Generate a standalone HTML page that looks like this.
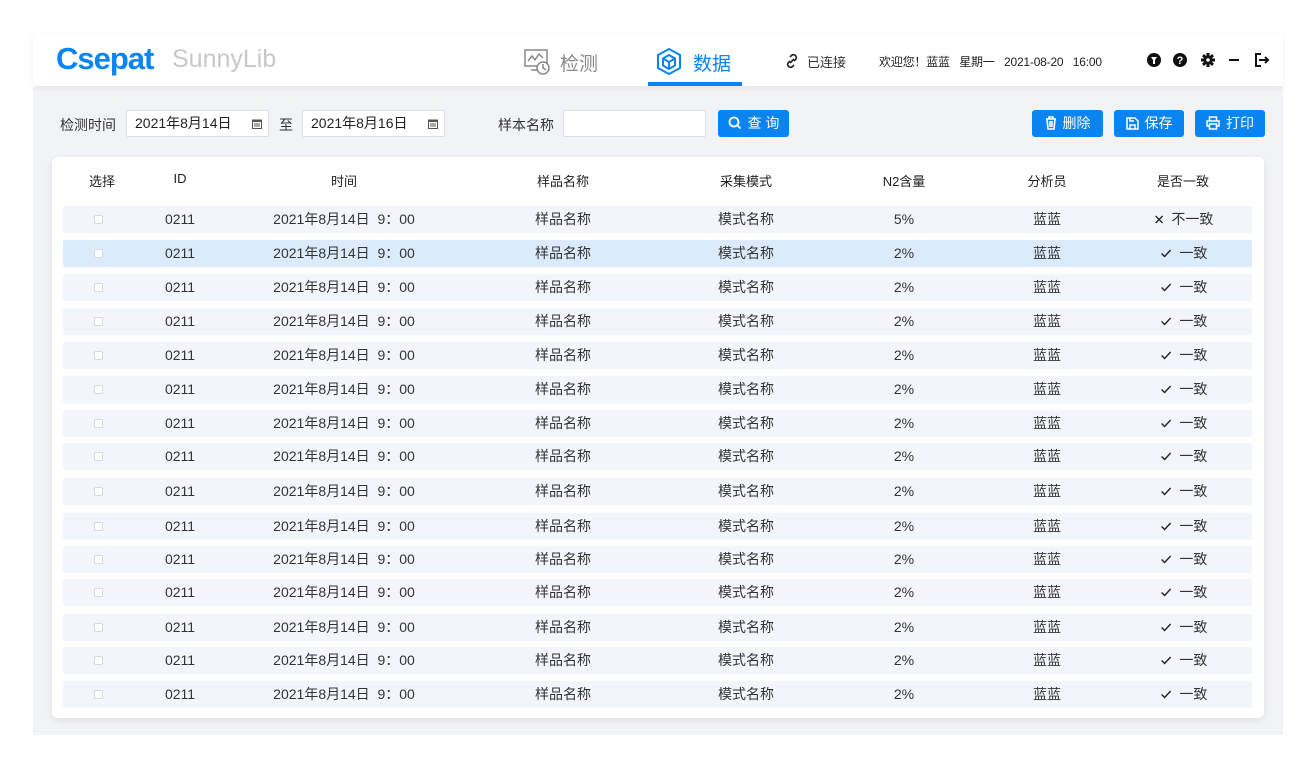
<!DOCTYPE html>
<html><head><meta charset="utf-8"><style>
*{margin:0;padding:0;box-sizing:border-box}
body{width:1316px;height:769px;background:#fff;font-family:"Liberation Sans","Noto Sans CJK SC",sans-serif;position:relative;overflow:hidden;color:#333}
.app{position:absolute;left:33px;top:33px;width:1250px;height:702px;background:#f2f3f7}
.hdr{position:absolute;left:0;top:0;width:1250px;height:53px;background:#fff;box-shadow:0 2px 6px rgba(0,0,0,.06)}
.abs{position:absolute;white-space:nowrap}
.inp{position:absolute;height:27px;background:#fff;border:1px solid #dcdfe6;border-radius:2px;font-size:14px;line-height:25px;padding-left:8px;color:#222}
.inp svg{position:absolute;right:6px;top:8px}
.btn{position:absolute;height:27px;background:#0a84f0;border-radius:3px;color:#fff;font-size:14px;line-height:27px;text-align:center}
.btn svg{vertical-align:-2px;margin-right:6px}
.card{position:absolute;left:19px;top:124px;width:1212px;height:561px;background:#fff;border-radius:6px;box-shadow:0 2px 8px rgba(0,0,0,.08)}
.th{position:absolute;top:14px;font-size:13px;color:#222;transform:translateX(-50%)}
.row{position:absolute;left:11px;width:1189px;height:27px;background:#f3f5fc;border-radius:2px;font-size:14px;color:#333}
.row.sel{background:#dbebfb}
.row span{position:absolute;top:0;line-height:27px;transform:translateX(-50%);white-space:nowrap}
.cb{position:absolute;left:31px;top:9px;width:9px;height:9px;border:1px solid #d5d8de;border-radius:2px;background:#fff}
</style></head><body>
<div class="app">
<div class="hdr">
<div class="abs" style="left:23px;top:8px;font-size:31px;font-weight:bold;color:#0a84f0;letter-spacing:-1px">Csepat</div>
<div class="abs" style="left:139px;top:12px;font-size:25px;color:#c8c8c8">SunnyLib</div>
<svg class="abs" style="left:490px;top:14px" width="30" height="30" viewBox="0 0 30 30" fill="none" stroke="#888" stroke-width="1.5"><rect x="2" y="3" width="22" height="16"/><path d="M5 14l4-5 3 4 4-6 4 4"/><path d="M8 23h10"/><circle cx="20" cy="21" r="6" fill="#fff"/><path d="M20 17v4l3 2"/></svg>
<div class="abs" style="left:527px;top:16px;font-size:19px;color:#888">检测</div>
<svg class="abs" style="left:622px;top:14px" width="28" height="30" viewBox="0 0 28 30" fill="none" stroke="#0a84f0" stroke-width="2"><path d="M14 2l11 6v13l-11 6-11-6V8z"/><path d="M14 8l6 3.5v7L14 22l-6-3.5v-7z"/><path d="M8 11.5l6 3.5 6-3.5M14 15v7"/></svg>
<div class="abs" style="left:660px;top:16px;font-size:19px;color:#0a84f0">数据</div>
<div class="abs" style="left:615px;top:49px;width:94px;height:4px;background:#0a84f0"></div>
<svg class="abs" style="left:750px;top:19px" width="18" height="18" viewBox="0 0 18 18" fill="none" stroke="#222" stroke-width="1.6"><path d="M7 11l4-4M7 5l2-2a3 3 0 014 4l-2 2M11 13l-2 2a3 3 0 01-4-4l2-2"/></svg>
<div class="abs" style="left:774px;top:19px;font-size:13px;color:#333">已连接</div>
<div class="abs" style="left:846px;top:20px;font-size:12px;color:#222;letter-spacing:-0.2px">欢迎您！蓝蓝&nbsp;&nbsp;&nbsp;星期一&nbsp;&nbsp;&nbsp;2021-08-20&nbsp;&nbsp;&nbsp;16:00</div>
<svg class="abs" style="left:1113px;top:19px" width="135" height="16" viewBox="0 0 135 16"><circle cx="8" cy="8" r="7" fill="#111"/><path d="M5 5h6l-2 3v4H7V8z" fill="#fff"/><circle cx="34" cy="8" r="7" fill="#111"/><text x="34" y="12" font-size="11" font-weight="bold" fill="#fff" text-anchor="middle" font-family="Liberation Sans">?</text><g transform="translate(62 8)" fill="#111"><rect x="-1.5" y="-7" width="3" height="14"/><rect x="-1.5" y="-7" width="3" height="14" transform="rotate(45)"/><rect x="-1.5" y="-7" width="3" height="14" transform="rotate(90)"/><rect x="-1.5" y="-7" width="3" height="14" transform="rotate(135)"/><circle r="4.5"/><circle r="1.8" fill="#fff"/></g><rect x="83" y="7" width="10" height="2" fill="#111"/><path d="M115 2h-5v12h5M113 8h9M119 5l3 3-3 3" fill="none" stroke="#111" stroke-width="2"/></svg>
</div>
<div class="abs" style="left:27px;top:82px;font-size:14px;color:#333">检测时间</div>
<div class="inp" style="left:93px;top:77px;width:143px">2021年8月14日<svg width="10" height="10" viewBox="0 0 10 10"><rect x="0.5" y="1" width="9" height="8.5" fill="none" stroke="#555"/><rect x="0.5" y="1" width="9" height="2" fill="#555"/><path d="M2 5h6M2 7h6" stroke="#555"/></svg></div>
<div class="abs" style="left:246px;top:82px;font-size:14px">至</div>
<div class="inp" style="left:269px;top:77px;width:143px">2021年8月16日<svg width="10" height="10" viewBox="0 0 10 10"><rect x="0.5" y="1" width="9" height="8.5" fill="none" stroke="#555"/><rect x="0.5" y="1" width="9" height="2" fill="#555"/><path d="M2 5h6M2 7h6" stroke="#555"/></svg></div>
<div class="abs" style="left:465px;top:82px;font-size:14px;color:#333">样本名称</div>
<div class="inp" style="left:530px;top:77px;width:143px"></div>
<div class="btn" style="left:685px;top:77px;width:71px"><svg width="14" height="14" viewBox="0 0 14 14" fill="none" stroke="#fff" stroke-width="1.8"><circle cx="6" cy="6" r="4.5"/><path d="M9.5 9.5l3 3"/></svg>查 询</div>
<div class="btn" style="left:999px;top:77px;width:71px"><svg width="12" height="14" viewBox="0 0 12 14" fill="none" stroke="#fff" stroke-width="1.6"><path d="M1 3h10M4 3V1h4v2M2 3l1 10h6l1-10M5 5v6M7 5v6"/></svg>删除</div>
<div class="btn" style="left:1081px;top:77px;width:70px"><svg width="13" height="13" viewBox="0 0 13 13" fill="none" stroke="#fff" stroke-width="1.5"><path d="M1 1h8l3 3v8H1z"/><path d="M4 12V8h5v4M4 1v3h4"/></svg>保存</div>
<div class="btn" style="left:1162px;top:77px;width:70px"><svg width="14" height="14" viewBox="0 0 14 14" fill="none" stroke="#fff" stroke-width="1.5"><path d="M3.5 5V1h7v4M3.5 10H1V5h12v5h-2.5"/><rect x="3.5" y="8" width="7" height="5"/></svg>打印</div>
<div class="card">
<div class="th" style="left:50px">选择</div><div class="th" style="left:128px">ID</div><div class="th" style="left:292px">时间</div><div class="th" style="left:511px">样品名称</div><div class="th" style="left:694px">采集模式</div><div class="th" style="left:852px">N2含量</div><div class="th" style="left:995px">分析员</div><div class="th" style="left:1131px">是否一致</div>
<div id="rows"></div>
</div>
</div>
<script>
var tops=[49,83,117,151,185,219,253,286,321,356,389,422,457,490,524];
var chk='<svg width="11" height="9" viewBox="0 0 11 9" style="vertical-align:0"><path d="M1 4.5l3 3L10 1" fill="none" stroke="#222" stroke-width="1.4"/></svg>';
var x='<svg width="9" height="9" viewBox="0 0 9 9" style="vertical-align:0"><path d="M1 1l7 7M8 1L1 8" stroke="#222" stroke-width="1.3"/></svg>';
var h='';
tops.forEach(function(t,i){
var sel=i==1?' sel':'';var p=i==0?'5%':'2%';var ok=i==0?x+'&nbsp;&nbsp;不一致':chk+'&nbsp;&nbsp;一致';
h+='<div class="row'+sel+'" style="top:'+t+'px"><div class="cb"></div><span style="left:117px">0211</span><span style="left:281px">2021年8月14日&nbsp;&nbsp;9：00</span><span style="left:500px">样品名称</span><span style="left:683px">模式名称</span><span style="left:841px">'+p+'</span><span style="left:984px">蓝蓝</span><span style="left:1121px">'+ok+'</span></div>';
});
document.getElementById('rows').innerHTML=h;
</script>
</body></html>
